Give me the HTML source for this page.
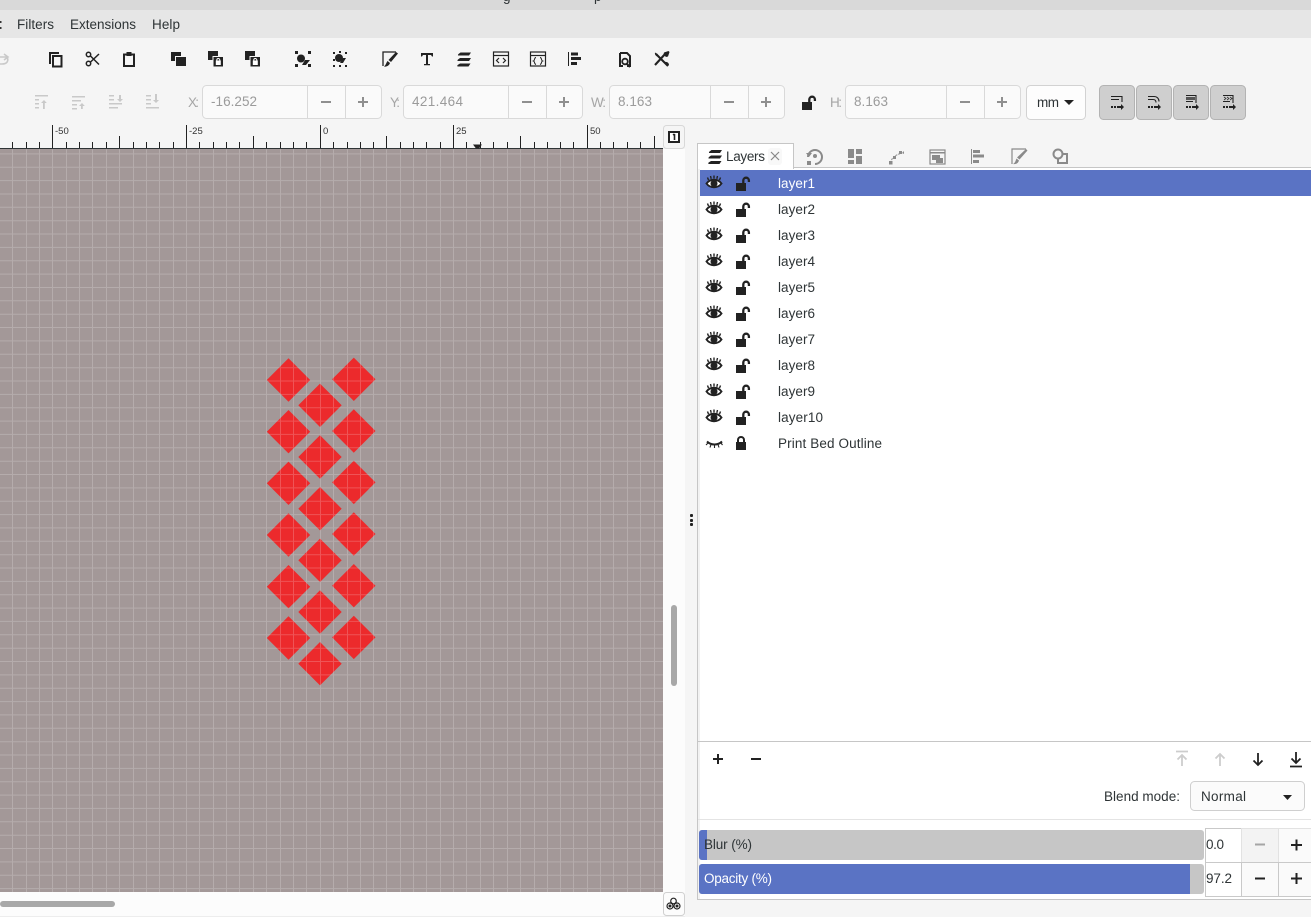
<!DOCTYPE html>
<html><head><meta charset="utf-8"><style>
html,body{margin:0;padding:0;background:#f5f5f5;overflow:hidden}
svg{display:block;position:absolute;left:0;top:0}
text{font-family:"Liberation Sans",sans-serif;font-size:13.5px;fill:#2e3436}
.g{fill:#9b9b9b}.l{fill:#a5a5a5}
.r{font-size:9.5px;fill:#333}
.i{fill:none;stroke:#222;stroke-width:2}
.b{fill:#222}
.gi{fill:#8a8a8a}.gs{fill:none;stroke:#8a8a8a;stroke-width:2}
.di{fill:#c9c9c9}.ds{fill:none;stroke:#c9c9c9;stroke-width:1.6}
.box{fill:#fafafa;stroke:#d9d9d9}
.pm{stroke:#8f8f8f;stroke-width:2;fill:none}
.pk{stroke:#222;stroke-width:2;fill:none}
</style></head><body>
<svg width="1311" height="917" viewBox="0 0 1311 917" xmlns="http://www.w3.org/2000/svg">
<defs>
<g id="eye"><path d="M0.500 8.500C4 3.500 12 3.500 15.500 8.500C12 13.500 4 13.500 0.500 8.500Z" fill="#fff" stroke="#222" stroke-width="1.900"/><circle cx="8" cy="8.500" r="3.500" fill="#222"/><path d="M2.500 5L1.500 2.500M5.200 3.800L4.500 1M8 3.500V0.500M10.800 3.800L11.500 1M13.500 5L14.500 2.500" stroke="#222" stroke-width="1.400" fill="none"/></g>
<g id="lk"><rect x="0" y="6" width="10" height="8" fill="#222"/><path d="M7.300 6.500V3.500A2.700 2.700 0 0 1 12.900 3.500V5" fill="none" stroke="#222" stroke-width="2.300"/></g>
<g id="sl"><path d="M3.500 0h10.500l-2 3h-10.500c-1 0-.5-1 0-1.500z"/><path d="M3 5.500h11l-2 3h-11c-1 0-.5-1 0-1.500z"/><path d="M3 11h10.500l-2 3h-11c-.5-1 0-1.500.5-1.800z"/></g>
</defs>

<!-- title + menu -->
<rect width="1311" height="10" fill="#d9d9d9"/>
<svg x="0" y="0" width="1311" height="10"><text x="503" y="1" fill="#444">g</text><text x="594" y="1">p</text></svg>
<rect y="10" width="1311" height="28" fill="#e6e6e6"/>
<rect x="0" y="21" width="1.500" height="2" fill="#333"/><rect x="0" y="27" width="1.500" height="2" fill="#333"/>
<text x="17" y="29" textLength="37">Filters</text>
<text x="70" y="29" textLength="66">Extensions</text>
<text x="152" y="29" textLength="28">Help</text>

<!-- toolbar 1 -->
<path d="M0 57H7M4 54l4 3-4 3M7 57c2 4 0 7-5 7H0" class="ds" stroke-width="1.500"/>
<path d="M50 64V53H59" class="i"/><rect x="53" y="56" width="8.500" height="10.500" class="i"/>
<g fill="none" stroke="#222" stroke-width="1.500"><circle cx="88.500" cy="63.500" r="2.200"/><circle cx="88.500" cy="54.500" r="2.200"/><path d="M90 62.500L99 54M90 55.500L99 64.500"/></g>
<rect x="124" y="54.500" width="10" height="11.500" class="i"/><rect x="126.500" y="52" width="5" height="4" class="b"/>
<g class="b"><rect x="171" y="52" width="10" height="9"/><rect x="175" y="56" width="11.500" height="11" fill="#f5f5f5"/><rect x="176" y="57" width="10" height="9"/></g>
<g id="st"><rect x="208" y="51" width="10" height="9" class="b"/><rect x="212.500" y="56" width="11" height="11" fill="#f5f5f5"/><rect x="213.500" y="57" width="9.500" height="9.500" class="b"/><rect x="215.800" y="60.500" width="5" height="4.500" fill="#fff"/><path d="M216.800 61v-1a1.500 1.500 0 0 1 3 0v1" fill="none" stroke="#fff"/></g>
<use href="#st" x="37"/>
<g class="b"><rect x="295" y="51" width="3" height="3"/><rect x="308" y="51" width="3" height="3"/><rect x="295" y="64" width="3" height="3"/><rect x="308" y="64" width="3" height="3"/><path d="M305 60h5l-4 5h-4z"/></g><circle cx="301" cy="58.500" r="4" class="b"/>
<g class="b"><rect x="333" y="52" width="2" height="2"/><rect x="339" y="51" width="2" height="2"/><rect x="345" y="52" width="2" height="2"/><rect x="333" y="59" width="2" height="2"/><rect x="333" y="65" width="2" height="2"/><rect x="339" y="65" width="2" height="2"/><rect x="345" y="65" width="2" height="2"/><circle cx="339" cy="58" r="4"/><path d="M343 58h3l-3 5h-3z"/></g>
<path d="M383 66V52H396" fill="none" stroke="#222" stroke-width="1.300"/><path d="M396 52L398 53.500L391 62L388.500 60ZM387.500 61L390 63C389 66 386 67 384 66.500C386 65 386 63 387.500 61Z" class="b"/>
<path d="M421 53h12v3.500h-1l-1-1.500h-3v9h2v1.200h-6V64h2v-9h-3l-1 1.500h-1z" class="b"/>
<use href="#sl" x="457" y="52.500" class="b"/>
<g fill="none" stroke="#222" stroke-width="1.200"><rect x="493.500" y="52" width="15" height="14"/><path d="M494 55.500H508"/><path d="M499 58l-2.500 2.500L499 63M503 58l2.500 2.500L503 63"/></g>
<g fill="none" stroke="#222" stroke-width="1.200"><rect x="530.500" y="52" width="15" height="14"/><path d="M531 55.500H545"/><path d="M536 57.500c-2 0-1 3-2.500 3.500 1.500.5.500 3 2.500 3.500M540 57.500c2 0 1 3 2.500 3.500-1.500.5-.5 3-2.500 3.500" stroke-width="1"/></g>
<path d="M568.500 52V66" stroke="#222" stroke-width="1"/><g class="b"><rect x="571" y="52.500" width="7" height="3"/><rect x="571" y="57" width="10" height="3"/><rect x="571" y="62" width="6" height="3"/></g>
<path d="M620 53h7l3 3v10h-3M623 66h-3V53" fill="none" stroke="#222" stroke-width="2"/><circle cx="625" cy="61.500" r="2.800" fill="none" stroke="#222" stroke-width="1.800"/><path d="M627 64l3 3" stroke="#222" stroke-width="2"/>
<path d="M656 54l12 12M666 53l-11 12" stroke="#222" stroke-width="2.100" fill="none"/><path d="M655 52.500a3.200 3.200 0 0 0 3.500 4l-1-2.500z" class="b"/><path d="M669 65.500a3.200 3.200 0 0 0-4-3.500l2 2zM664 52.500l4.500-1.500 1 1-1.500 4.500-2 .5-2.500-2.500z" class="b"/>

<!-- toolbar 2 disabled -->
<g class="di">
<path d="M35 95h13v1.500H35zM35 99h4v1.500h-4zM35 103h4v1.500h-4zM35 107h4v1.500h-4zM44 100l-3 3h2v6h1.800v-6h2z"/>
<path d="M72 96h13v1.500H72zM72 100h9v1.500h-9zM72 104h5v1.500h-5zM72 108h5v1.500h-5zM82 103l-3 3h2v3h1.800v-3h2z"/>
<path d="M109 95h5v1.500h-5zM109 99h5v1.500h-5zM109 103h13v1.500h-13zM109 107h9v1.500h-9zM119 95v4h-2l3 3 3-3h-2v-4z"/>
<path d="M146 95h5v1.500h-5zM146 99h5v1.500h-5zM146 103h5v1.500h-5zM146 107h13v1.500h-13zM155 94v6h-2l3 3 3-3h-2v-6z"/>
</g>
<text x="188" y="107" class="l" textLength="11">X:</text>
<rect x="202.500" y="85.500" width="179" height="33" rx="4" class="box"/><path d="M307.500 86v32M345.500 86v32" stroke="#d9d9d9"/>
<text x="211" y="106" class="g" textLength="46">-16.252</text><path d="M321 102h10M358 102h10M363 97v10" class="pm"/>
<text x="390" y="107" class="l" textLength="10">Y:</text>
<rect x="403.500" y="85.500" width="179" height="33" rx="4" class="box"/><path d="M508.500 86v32M546.500 86v32" stroke="#d9d9d9"/>
<text x="412" y="106" class="g" textLength="51">421.464</text><path d="M522 102h10M559 102h10M564 97v10" class="pm"/>
<text x="591" y="107" class="l" textLength="15">W:</text>
<rect x="609.500" y="85.500" width="175" height="33" rx="4" class="box"/><path d="M710.500 86v32M748.500 86v32" stroke="#d9d9d9"/>
<text x="618" y="106" class="g" textLength="34">8.163</text><path d="M724 102h10M761 102h10M766 97v10" class="pm"/>
<use href="#lk" x="802" y="96"/>
<text x="830" y="107" class="l" textLength="12">H:</text>
<rect x="845.500" y="85.500" width="175" height="33" rx="4" class="box"/><path d="M946.500 86v32M984.500 86v32" stroke="#d9d9d9"/>
<text x="854" y="106" class="g" textLength="34">8.163</text><path d="M960 102h10M997 102h10M1002 97v10" class="pm"/>
<rect x="1026.500" y="85.500" width="59" height="34" rx="4" fill="#fdfdfd" stroke="#d2d2d2"/>
<text x="1037" y="107" textLength="22">mm</text><path d="M1064 100h10l-5 5z" fill="#222"/>
<g fill="#cfcfcf" stroke="#b3b3b3"><rect x="1099.500" y="85.500" width="35" height="34" rx="4"/><rect x="1136.500" y="85.500" width="35" height="34" rx="4"/><rect x="1173.500" y="85.500" width="35" height="34" rx="4"/><rect x="1210.500" y="85.500" width="35" height="34" rx="4"/></g>
<g fill="none" stroke="#222" stroke-width="1.100">
<path d="M1111 96.500h11V102M1111 99.500h8"/>
<path d="M1148 96.500h6c3 0 5 2 5 5M1148 99.500h5c2 0 3 1 3 3"/>
<path d="M1186 95.500h10V103M1186 101.500h7"/>
<path d="M1223 95.500h10V103M1223 101.500h7"/>
</g>
<rect x="1186" y="97" width="9" height="3" fill="#555"/>
<path d="M1224 97l2 1.500-2 1.500M1227 97l2 1.500-2 1.500M1230 97l2 1.500-2 1.500" fill="none" stroke="#333" stroke-width=".8"/>
<g fill="#222"><path d="M1111 106h2v2h-2zM1114 106h2v2h-2zM1117 106h4v-2l3 3-3 3v-2h-4z"/><path d="M1148 106h2v2h-2zM1151 106h2v2h-2zM1154 106h4v-2l3 3-3 3v-2h-4z"/><path d="M1186 106h2v2h-2zM1189 106h2v2h-2zM1192 106h4v-2l3 3-3 3v-2h-4z"/><path d="M1223 106h2v2h-2zM1226 106h2v2h-2zM1229 106h4v-2l3 3-3 3v-2h-4z"/></g>

<!-- ruler -->
<rect x="0" y="124" width="663" height="25" fill="#f5f5f5"/>
<rect x="0" y="148" width="663" height="1" fill="#2e3436"/>
<path stroke="#222" stroke-width="1" fill="none" d="M12.500 142V148M26.500 142V148M39.500 142V148M66.500 142V148M79.500 142V148M92.500 142V148M106.500 142V148M133.500 142V148M146.500 142V148M159.500 142V148M173.500 142V148M199.500 142V148M213.500 142V148M226.500 142V148M239.500 142V148M266.500 142V148M280.500 142V148M293.500 142V148M306.500 142V148M333.500 142V148M347.500 142V148M360.500 142V148M373.500 142V148M400.500 142V148M413.500 142V148M426.500 142V148M440.500 142V148M466.500 142V148M480.500 142V148M493.500 142V148M507.500 142V148M534.500 142V148M547.500 142V148M560.500 142V148M573.500 142V148M600.500 142V148M613.500 142V148M627.500 142V148M640.500 142V148M119.500 136V148M253.500 136V148M386.500 136V148M520.500 136V148M654.500 136V148M52.500 125V148M186.500 125V148M320.500 125V148M453.500 125V148M587.500 125V148"/>
<text x="55" y="134" class="r">-50</text><text x="189" y="134" class="r">-25</text><text x="323" y="134" class="r">0</text><text x="456" y="134" class="r">25</text><text x="590" y="134" class="r">50</text>
<path d="M473 144.500h9l-3 4h-3z" fill="#222"/>

<!-- canvas -->
<rect x="0" y="149" width="663" height="743" fill="#a39898"/>
<g fill="#ec2a2c">
<path d="M288.500 358.300L310.200 380L288.500 401.700L266.800 380Z"/><path d="M288.500 410L310.200 431.700L288.500 453.400L266.800 431.700Z"/><path d="M288.500 461.600L310.200 483.300L288.500 505L266.800 483.300Z"/><path d="M288.500 513.300L310.200 535L288.500 556.700L266.800 535Z"/><path d="M288.500 565L310.200 586.700L288.500 608.400L266.800 586.700Z"/><path d="M288.500 616.300L310.200 638L288.500 659.700L266.800 638Z"/>
<path d="M353.800 357.600L375.500 379.300L353.800 401L332.100 379.300Z"/><path d="M353.800 409.300L375.500 431L353.800 452.700L332.100 431Z"/><path d="M353.800 460.700L375.500 482.400L353.800 504.100L332.100 482.400Z"/><path d="M353.800 512.300L375.500 534L353.800 555.700L332.100 534Z"/><path d="M353.800 564L375.500 585.700L353.800 607.400L332.100 585.700Z"/><path d="M353.800 615.700L375.500 637.400L353.800 659.100L332.100 637.400Z"/>
<path d="M320 383.600L341.700 405.300L320 427L298.300 405.300Z"/><path d="M320 435.300L341.700 457L320 478.700L298.300 457Z"/><path d="M320 487L341.700 508.700L320 530.400L298.300 508.700Z"/><path d="M320 538.600L341.700 560.300L320 582L298.300 560.300Z"/><path d="M320 590.300L341.700 612L320 633.700L298.300 612Z"/><path d="M320 642L341.700 663.700L320 685.400L298.300 663.700Z"/>
</g>
<path fill="none" stroke="#fff" stroke-opacity=".2" stroke-width="1" d="M12.500 149V892M26.500 149V892M39.500 149V892M52.500 149V892M66.500 149V892M79.500 149V892M92.500 149V892M106.500 149V892M119.500 149V892M133.500 149V892M146.500 149V892M159.500 149V892M173.500 149V892M186.500 149V892M199.500 149V892M213.500 149V892M226.500 149V892M239.500 149V892M253.500 149V892M266.500 149V892M280.500 149V892M293.500 149V892M306.500 149V892M320.500 149V892M333.500 149V892M347.500 149V892M360.500 149V892M373.500 149V892M386.500 149V892M400.500 149V892M413.500 149V892M426.500 149V892M440.500 149V892M453.500 149V892M466.500 149V892M480.500 149V892M493.500 149V892M507.500 149V892M520.500 149V892M534.500 149V892M547.500 149V892M560.500 149V892M573.500 149V892M587.500 149V892M600.500 149V892M613.500 149V892M627.500 149V892M640.500 149V892M654.500 149V892M0 153.900h663M0 167.300h663M0 180.600h663M0 194h663M0 207.300h663M0 220.700h663M0 234h663M0 247.400h663M0 260.800h663M0 274.100h663M0 287.500h663M0 300.800h663M0 314.200h663M0 327.500h663M0 340.900h663M0 354.300h663M0 367.700h663M0 381h663M0 394.400h663M0 407.700h663M0 421.100h663M0 434.400h663M0 447.800h663M0 461.200h663M0 474.500h663M0 487.900h663M0 501.200h663M0 514.600h663M0 527.900h663M0 541.300h663M0 554.700h663M0 568h663M0 581.400h663M0 594.700h663M0 608.100h663M0 621.400h663M0 634.800h663M0 648.200h663M0 661.500h663M0 674.900h663M0 688.200h663M0 701.600h663M0 714.900h663M0 728.300h663M0 741.700h663M0 755h663M0 768.400h663M0 781.700h663M0 795.100h663M0 808.400h663M0 821.800h663M0 835.200h663M0 848.500h663M0 861.900h663M0 875.200h663M0 888.600h663"/>

<!-- scroll strips -->
<rect x="663" y="149" width="22" height="743" fill="#fcfcfc"/>
<rect x="0" y="892" width="685" height="24" fill="#fcfcfc"/>
<rect x="0" y="916" width="685" height="1" fill="#ededed"/>
<rect x="671" y="605" width="6" height="81" rx="3" fill="#a8a8a8"/>
<rect x="0" y="901" width="115" height="6" rx="3" fill="#a8a8a8"/>
<rect x="663.500" y="125.500" width="21" height="23" rx="3" fill="#f5f5f5" stroke="#d8d8d8"/>
<rect x="669" y="132" width="10" height="10" fill="#fff" stroke="#222" stroke-width="2"/><path d="M674.500 134v6M673 135l1.500-1" stroke="#222" stroke-width="1.600" fill="none"/>
<rect x="663.500" y="892.500" width="21" height="23" rx="3" fill="#fcfcfc" stroke="#d0d0d0"/>
<g fill="none" stroke="#222" stroke-width="1.200"><circle cx="673.500" cy="901" r="2.800"/><circle cx="670" cy="906" r="3"/><circle cx="677" cy="906" r="3"/></g><circle cx="670" cy="906" r="1.500" fill="#222"/><circle cx="677" cy="906" r="1.500" fill="#222"/>

<!-- dock handle -->
<g fill="#222"><rect x="690" y="514" width="3" height="3" rx="1"/><rect x="690" y="519" width="3" height="3" rx="1"/><rect x="690" y="523" width="3" height="3" rx="1"/></g>

<!-- panel -->
<rect x="697.500" y="167.500" width="620" height="732" fill="#fff" stroke="#c6c6c6"/>
<rect x="698.500" y="168" width="1" height="731" fill="#e4e4e4"/>
<rect x="697.500" y="143.500" width="96" height="25" fill="#fff" stroke="#c6c6c6"/>
<rect x="698" y="165" width="95" height="4" fill="#fff"/>
<use href="#sl" x="708" y="150" class="b"/>
<text x="726" y="161" textLength="39">Layers</text>
<rect x="768" y="148" width="14" height="17" rx="3" fill="#f8f8f8"/>
<path d="M771 152l8 8M779 152l-8 8" stroke="#888" stroke-width="1.200"/>

<!-- tab icons -->
<path d="M808 157a7 7 0 1 1 7 7" class="gs"/><circle cx="815" cy="156" r="2" class="gi"/><path d="M806 153l3 4 3-4z M807 161h4v4h-4z" class="gi"/>
<g class="gi"><rect x="848" y="149" width="6" height="9"/><rect x="856" y="149" width="6" height="5"/><rect x="848" y="160" width="6" height="4"/><rect x="856" y="156" width="6" height="8"/></g>
<path d="M891 163c0-5 4-8 11-10" fill="none" stroke="#8a8a8a" stroke-width="1" stroke-dasharray="2 1"/><g class="gi"><rect x="889" y="161" width="3.500" height="3.500"/><rect x="893" y="156" width="3" height="3"/><rect x="899" y="151" width="3" height="3"/><path d="M902 153l2-2v3z"/></g>
<rect x="930" y="150" width="15" height="14" fill="none" stroke="#8a8a8a" stroke-width="1.200"/><rect x="930" y="152" width="15" height="1.500" class="gi"/><rect x="932" y="155" width="8" height="5" class="gi"/><rect x="936" y="158" width="7" height="5" class="gi"/>
<path d="M971.500 149V164" stroke="#8a8a8a" fill="none"/><g class="gi"><rect x="973" y="150" width="7" height="3"/><rect x="973" y="154.500" width="11" height="3"/><rect x="973" y="160" width="6" height="3"/></g>
<path d="M1012 164V149H1026" fill="none" stroke="#8a8a8a" stroke-width="1.200"/><path d="M1026 149l1.500 1.500-8 9-2.500-2zM1016.500 158.500l2.500 2c-1 3-3 4-6 3.500 2-1 2.500-3 3.500-5.500z" class="gi"/>
<circle cx="1058" cy="154" r="4.500" class="gs"/><path d="M1063 154h4v9h-9v-4" class="gs"/>

<!-- layers rows -->
<rect x="700" y="170" width="611" height="26" fill="#5a73c4"/>
<use href="#eye" x="706" y="175"/><use href="#lk" x="736" y="177"/><text x="778" y="188" style="fill:#fff" textLength="37">layer1</text>
<use href="#eye" x="706" y="201"/><use href="#lk" x="736" y="203"/><text x="778" y="214" textLength="37">layer2</text>
<use href="#eye" x="706" y="227"/><use href="#lk" x="736" y="229"/><text x="778" y="240" textLength="37">layer3</text>
<use href="#eye" x="706" y="253"/><use href="#lk" x="736" y="255"/><text x="778" y="266" textLength="37">layer4</text>
<use href="#eye" x="706" y="279"/><use href="#lk" x="736" y="281"/><text x="778" y="292" textLength="37">layer5</text>
<use href="#eye" x="706" y="305"/><use href="#lk" x="736" y="307"/><text x="778" y="318" textLength="37">layer6</text>
<use href="#eye" x="706" y="331"/><use href="#lk" x="736" y="333"/><text x="778" y="344" textLength="37">layer7</text>
<use href="#eye" x="706" y="357"/><use href="#lk" x="736" y="359"/><text x="778" y="370" textLength="37">layer8</text>
<use href="#eye" x="706" y="383"/><use href="#lk" x="736" y="385"/><text x="778" y="396" textLength="37">layer9</text>
<use href="#eye" x="706" y="409"/><use href="#lk" x="736" y="411"/><text x="778" y="422" textLength="45">layer10</text>
<path d="M707 441.500C711 445.500 718 445.500 722 441.500" fill="none" stroke="#222" stroke-width="2"/><path d="M708 443l-2 2M711 444.500l-1 3M714.500 445v3M718 444.500l1 3M721 443l1.500 2" stroke="#222" stroke-width="1.100" fill="none"/>
<rect x="736" y="442" width="10" height="8" class="b"/><path d="M738 442.500V440a3 3 0 0 1 6 0v2.500" fill="none" stroke="#222" stroke-width="2"/>
<text x="778" y="448" textLength="104">Print Bed Outline</text>

<rect x="698" y="741" width="613" height="1" fill="#c6c6c6"/>
<path d="M713 759h10M718 754v10M751 759h10" class="pk"/>
<path d="M1176 751.500h12M1182 766v-11M1177.500 759.500l4.500-4.500 4.500 4.500" fill="none" stroke="#cdcdcd" stroke-width="1.800"/>
<path d="M1220 766v-12M1215.500 758.500l4.500-4.500 4.500 4.500" fill="none" stroke="#cdcdcd" stroke-width="1.800"/>
<path d="M1258 753v12M1253.500 760.500l4.500 4.500 4.500-4.500" fill="none" stroke="#222" stroke-width="1.800"/>
<path d="M1296 752v11M1291.500 758.500l4.500 4.500 4.500-4.500M1290 766.500h12" fill="none" stroke="#222" stroke-width="1.800"/>

<text x="1104" y="801" textLength="76">Blend mode:</text>
<rect x="1190.500" y="781.500" width="114" height="29" rx="4" fill="#fbfbfb" stroke="#cfcfcf"/>
<text x="1201" y="801" textLength="45">Normal</text><path d="M1283 795h9l-4.500 5z" fill="#222"/>
<rect x="698" y="819" width="613" height="1" fill="#e4e4e4"/>

<rect x="699" y="830" width="505" height="30" rx="3" fill="#c6c6c6"/>
<path d="M702 830h5v30h-5a3 3 0 0 1-3-3v-24a3 3 0 0 1 3-3z" fill="#5a73c4"/>
<text x="704" y="849" textLength="48">Blur (%)</text>
<rect x="699" y="864" width="505" height="30" rx="3" fill="#c6c6c6"/>
<path d="M702 864h488v30h-488a3 3 0 0 1-3-3v-24a3 3 0 0 1 3-3z" fill="#5a73c4"/>
<text x="704" y="883" style="fill:#fff" textLength="68">Opacity (%)</text>

<rect x="1205.500" y="828.500" width="36" height="34" fill="#fff" stroke="#c9c9c9"/>
<rect x="1241.500" y="828.500" width="37" height="34" fill="#f3f3f3" stroke="#e2e2e2"/>
<rect x="1278.500" y="828.500" width="40" height="34" fill="#fafafa" stroke="#e2e2e2"/>
<rect x="1205.500" y="862.500" width="36" height="34" fill="#fff" stroke="#c9c9c9"/>
<rect x="1241.500" y="862.500" width="37" height="34" fill="#fafafa" stroke="#c9c9c9"/>
<rect x="1278.500" y="862.500" width="40" height="34" fill="#fafafa" stroke="#c9c9c9"/>
<text x="1206" y="849" textLength="18">0.0</text><text x="1206" y="883" textLength="26">97.2</text>
<path d="M1255 844.500h10" stroke="#a5a5a5" stroke-width="2"/>
<path d="M1291 845h11M1296.500 839.500v11M1255 878.500h10M1291 878.500h11M1296.500 873v11" class="pk"/>
</svg>
</body></html>
